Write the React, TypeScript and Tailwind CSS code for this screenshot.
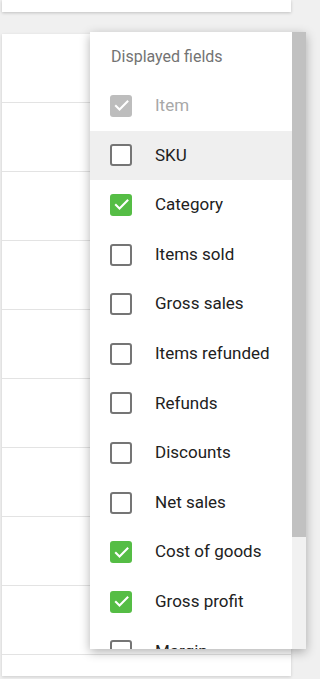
import React from "react";

const items: { label: string; state: "disabled" | "on" | "off" }[] = [
  { label: "Item", state: "disabled" },
  { label: "SKU", state: "off" },
  { label: "Category", state: "on" },
  { label: "Items sold", state: "off" },
  { label: "Gross sales", state: "off" },
  { label: "Items refunded", state: "off" },
  { label: "Refunds", state: "off" },
  { label: "Discounts", state: "off" },
  { label: "Net sales", state: "off" },
  { label: "Cost of goods", state: "on" },
  { label: "Gross profit", state: "on" },
  { label: "Margin", state: "off" },
];

function Check() {
  return (
    <svg viewBox="0 0 24 24" className="w-[19px] h-[19px]" fill="none" stroke="white" strokeWidth="2.6" strokeLinecap="square">
      <path d="M5 12.5l4.5 4.5L19.5 7" />
    </svg>
  );
}

function Box({ state }: { state: "disabled" | "on" | "off" }) {
  if (state === "off")
    return <div className="w-[22px] h-[22px] rounded-[3px] border-2 border-[#757575] bg-white shrink-0" />;
  return (
    <div
      className={
        "w-[22px] h-[22px] rounded-[3px] flex items-center justify-center shrink-0 " +
        (state === "on" ? "bg-[#55bd45]" : "bg-[#bdbdbd]")
      }
    >
      <Check />
    </div>
  );
}

export default function App() {
  return (
    <div className="relative h-[679px] w-[320px] overflow-hidden bg-[#f0f0f0]" style={{ fontFamily: "Roboto, 'Liberation Sans', sans-serif" }}>
      <div className="ml-[2px] w-[289px] h-[12px] bg-white shadow-[0_1px_3px_rgba(0,0,0,0.2)]" />
      <div className="mt-[22px] ml-[2px] w-[289px] h-[642px] bg-white shadow-[0_1px_3px_rgba(0,0,0,0.15)] flex flex-col">
        {Array.from({ length: 10 }).map((_, i) => (
          <div key={i} className="h-[69px] shrink-0 border-b border-[#e3e3e3]" />
        ))}
      </div>

      <div className="absolute left-[90px] top-[32px] w-[216px] h-[617px] bg-white flex shadow-[0_3px_10px_rgba(0,0,0,0.3)]">
        <div className="flex-1 overflow-hidden">
          <div className="h-[49px] flex items-center pl-[21px] text-[16px] text-[#737373]">Displayed fields</div>
          {items.map((it) => (
            <div
              key={it.label}
              className={
                "h-[49.6px] flex items-center pl-[20px] gap-[23px] text-[17px] " +
                (it.label === "SKU" ? "bg-[#efefef] " : "") +
                (it.state === "disabled" ? "text-[#a8a8a8]" : "text-[#212121]")
              }
            >
              <Box state={it.state} />
              <span>{it.label}</span>
            </div>
          ))}
        </div>
        <div className="w-[14px] bg-[#f1f1f1] flex flex-col">
          <div className="h-[505px] bg-[#c1c1c1]" />
        </div>
      </div>
    </div>
  );
}
